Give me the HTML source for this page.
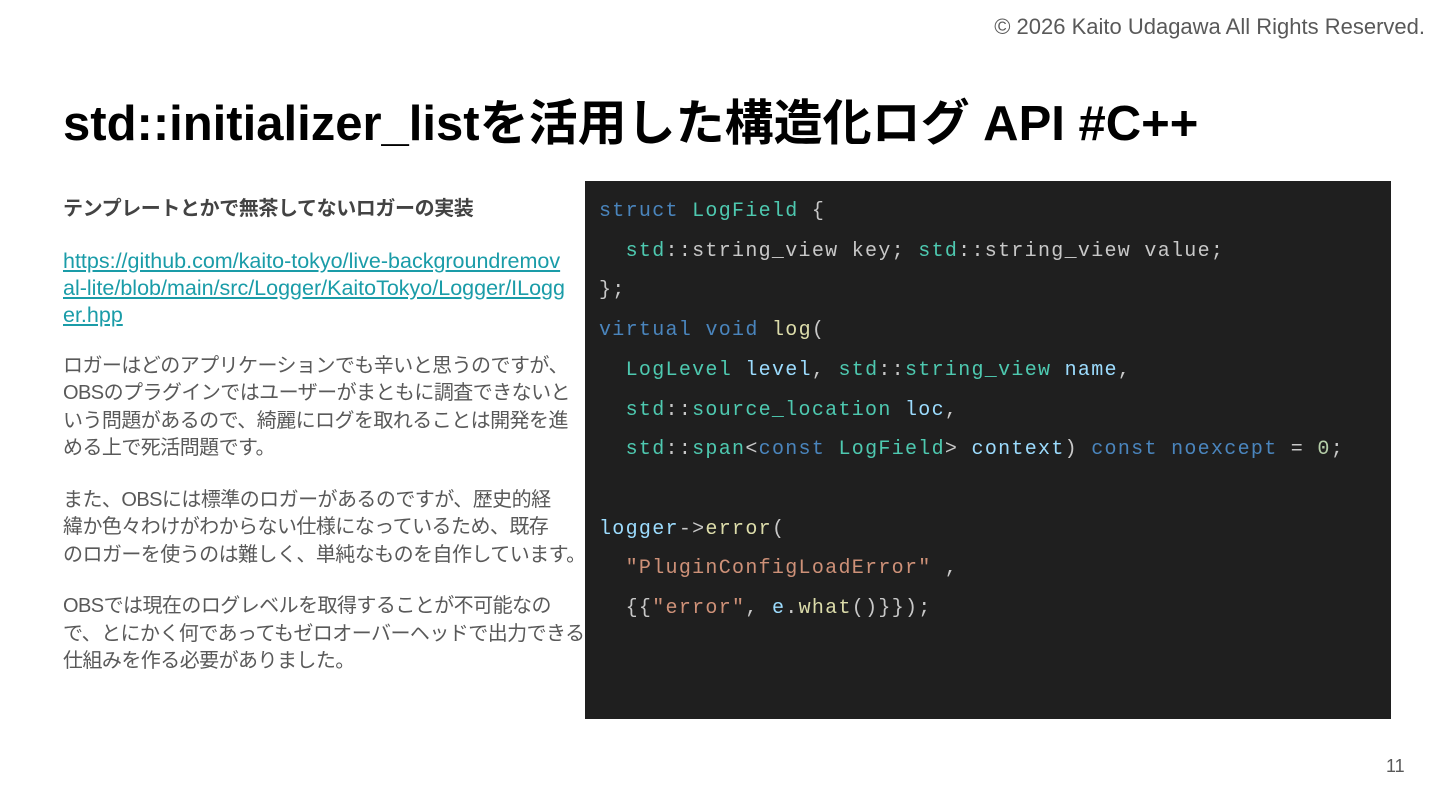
<!DOCTYPE html>
<html><head><meta charset="utf-8"><style>
body{margin:0;width:1440px;height:810px;background:#fff;position:relative;overflow:hidden;font-family:"Liberation Sans","Noto Sans CJK JP",sans-serif;}
.copy{position:absolute;right:15px;top:14px;font-size:22px;color:#595959;}
h1{position:absolute;left:63px;top:84px;margin:0;font-size:49px;font-weight:bold;color:#000;white-space:nowrap;letter-spacing:0px;}
.left{position:absolute;left:63px;top:196px;width:540px;font-size:20px;line-height:27.5px;color:#595959;letter-spacing:-0.55px;white-space:nowrap;}
.left p{margin:0 0 24px 0;}
.left b{color:#434343;letter-spacing:-0.4px;}
.left p.l{font-size:21.5px;line-height:27px;margin-bottom:24px;font-family:"Liberation Sans",sans-serif;letter-spacing:0;}
.left a{color:#1a9ca8;text-decoration:underline;}
.code{position:absolute;left:585px;top:181px;width:806px;height:538px;background:#1f1f1f;}
pre{margin:0;position:absolute;left:14px;top:11px;font-family:"Liberation Mono",monospace;font-size:20px;letter-spacing:1.3px;line-height:39.7px;color:#c8c8c8;}
.k{color:#4a85bd}.t{color:#4ec9b0}.f{color:#dcdcaa}.v{color:#9cdcfe}.s{color:#ce9178}.n{color:#b5cea8}
.pg{position:absolute;left:1386px;top:756px;font-size:18px;color:#595959;}
</style></head><body>
<div class="copy">© 2026 Kaito Udagawa All Rights Reserved.</div>
<h1>std::initializer_listを活用した構造化ログ API #C++</h1>
<div class="left">
<p><b>テンプレートとかで無茶してないロガーの実装</b></p>
<p class="l"><a>https://github.com/kaito-tokyo/live-backgroundremov<br>al-lite/blob/main/src/Logger/KaitoTokyo/Logger/ILogg<br>er.hpp</a></p>
<p>ロガーはどのアプリケーションでも辛いと思うのですが、<br>OBSのプラグインではユーザーがまともに調査できないと<br>いう問題があるので、綺麗にログを取れることは開発を進<br>める上で死活問題です。</p>
<p>また、OBSには標準のロガーがあるのですが、歴史的経<br>緯か色々わけがわからない仕様になっているため、既存<br>のロガーを使うのは難しく、単純なものを自作しています。</p>
<p>OBSでは現在のログレベルを取得することが不可能なの<br>で、とにかく何であってもゼロオーバーヘッドで出力できる<br>仕組みを作る必要がありました。</p>
</div>
<div class="code"><pre><span class="k">struct</span> <span class="t">LogField</span> {
  <span class="t">std</span>::string_view key; <span class="t">std</span>::string_view value;
};
<span class="k">virtual</span> <span class="k">void</span> <span class="f">log</span>(
  <span class="t">LogLevel</span> <span class="v">level</span>, <span class="t">std</span>::<span class="t">string_view</span> <span class="v">name</span>,
  <span class="t">std</span>::<span class="t">source_location</span> <span class="v">loc</span>,
  <span class="t">std</span>::<span class="t">span</span>&lt;<span class="k">const</span> <span class="t">LogField</span>&gt; <span class="v">context</span>) <span class="k">const</span> <span class="k">noexcept</span> = <span class="n">0</span>;

<span class="v">logger</span>-&gt;<span class="f">error</span>(
  <span class="s">"PluginConfigLoadError"</span> ,
  {{<span class="s">"error"</span>, <span class="v">e</span>.<span class="f">what</span>()}});</pre></div>
<div class="pg">11</div>
</body></html>
